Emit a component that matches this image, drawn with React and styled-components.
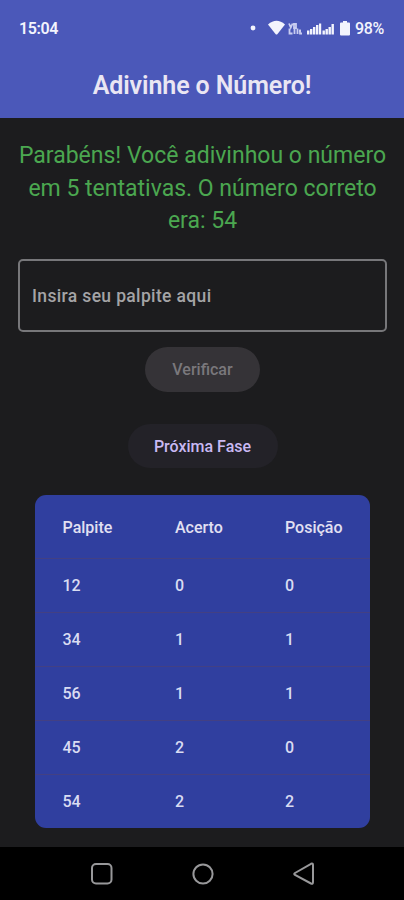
import React from 'react';
import styled, { createGlobalStyle } from 'styled-components';

const GlobalStyle = createGlobalStyle`
  * {
    box-sizing: border-box;
  }
  body {
    margin: 0;
    background-color: #1c1c1e;
    font-family: Roboto, sans-serif;
  }
`;

const Screen = styled.div`
  display: flex;
  flex-direction: column;
  width: 404px;
  height: 900px;
  overflow: hidden;
  background-color: #1c1c1e;
`;

const Header = styled.header`
  height: 118px;
  flex-shrink: 0;
  background-color: #4b58b9;
`;

const StatusBar = styled.div`
  display: flex;
  align-items: center;
  justify-content: space-between;
  height: 56px;
  padding: 0 20px 0 19px;
  color: #f3f4fd;
  font-size: 16px;
  font-weight: 600;
`;

const Clock = styled.span`
  letter-spacing: -0.4px;
`;

const StatusIcons = styled.div`
  display: flex;
  align-items: center;
`;

const Battery = styled.span`
  margin-left: 4px;
  font-weight: 500;
  letter-spacing: -0.3px;
`;

const Title = styled.h1`
  margin: 0;
  padding-top: 15px;
  line-height: 30px;
  color: #eae6f3;
  font-size: 25px;
  font-weight: 600;
  letter-spacing: -0.1px;
  text-align: center;
`;

const Content = styled.main`
  display: flex;
  flex: 1;
  flex-direction: column;
  align-items: center;
  padding: 22px 17px 0 18px;
`;

const Message = styled.p`
  width: 369px;
  margin: 0;
  color: #4ba750;
  font-size: 23px;
  line-height: 32.6px;
  text-align: center;
`;

const GuessField = styled.div`
  display: flex;
  align-items: center;
  width: 100%;
  height: 73px;
  margin-top: 21px;
  padding: 2px 0 0 12px;
  border: 2px solid #77777a;
  border-radius: 5px;
  color: #a4a4a6;
  font-size: 17.5px;
  font-weight: 500;
  letter-spacing: 0.35px;
`;

const Button = styled.button`
  width: ${(props) => props.$width}px;
  height: ${(props) => props.$height}px;
  margin-top: ${(props) => props.$top}px;
  padding: 1px 0 0;
  border: 0;
  border-radius: 23px;
  background-color: ${(props) => props.$background};
  color: ${(props) => props.$color};
  font-family: inherit;
  font-size: 16px;
  font-weight: 500;
`;

const Table = styled.div`
  width: 335px;
  margin-top: 27px;
  border-radius: 11px;
  background-color: #303f9f;
  color: #d9dcf2;
  font-size: 16px;
  font-weight: 500;
`;

const Row = styled.div`
  display: grid;
  grid-template-columns: 112.5px 110px 1fr;
  align-items: center;
  height: 54px;
  padding: 1px 0 0 27.5px;
  border-top: 1px solid #434083;
`;

const HeadRow = styled(Row)`
  height: 63px;
  padding-top: 2px;
  border-top: 0;
  color: #e2e0f2;
`;

const NavBar = styled.nav`
  display: flex;
  align-items: center;
  justify-content: center;
  gap: 77px;
  height: 53px;
  flex-shrink: 0;
  padding-left: 1px;
  background-color: #000;
`;

const guesses = [
  ['12', '0', '0'],
  ['34', '1', '1'],
  ['56', '1', '1'],
  ['45', '2', '0'],
  ['54', '2', '2'],
];

function SignalIcons() {
  return (
    <svg width="101" height="20" viewBox="0 -0.5 101 20" fill="#f3f4fd">
      <circle cx="3" cy="9.5" r="2.4" />
      <path d="M18 6 Q26.5 -1.5 35 6 L27.5 15.5 Q26.5 16.5 25.5 15.5 Z" />
      <g fill="none" stroke="#c9cdf1" strokeWidth="1.8">
        <path d="M39 5 l1.8 4 l1.8 -4 M44 5.500 h2 v4 h-2 z M39.5 10 v5 h3 M44.5 10 v5.500 M47.500 10 v5.500 M50 11 v4 h2 M49 12.5 h2" />
      </g>
      <path d="M57 12h2.4v4h-2.4zM60 10.5h2.4v5.5h-2.4zM63 8.5h2.4v7.5h-2.4zM66 6.5h2.4v9.5h-2.4zM69 5h2.2v11h-2.2z" />
      <path d="M72.5 12h2.4v4h-2.4zM75.5 10.5h2.4v5.5h-2.4zM78.5 8.5h2.4v7.5h-2.4zM81.5 5.5h2.4v10.5h-2.4z" />
      <path d="M93 2.5h4v1.5h2q1 0 1 1v11q0 1 -1 1h-8q-1 0 -1 -1V5q0 -1 1 -1h2z" />
    </svg>
  );
}

function App() {
  return (
    <>
      <GlobalStyle />
      <Screen>
        <Header>
          <StatusBar>
            <Clock>15:04</Clock>
            <StatusIcons>
              <SignalIcons />
              <Battery>98%</Battery>
            </StatusIcons>
          </StatusBar>
          <Title>Adivinhe o Número!</Title>
        </Header>
        <Content>
          <Message>
            Parabéns! Você adivinhou o número em 5 tentativas. O número correto era: 54
          </Message>
          <GuessField>Insira seu palpite aqui</GuessField>
          <Button $width={115} $height={45} $top={15} $background="#353337" $color="#7a787c">
            Verificar
          </Button>
          <Button $width={150} $height={44} $top={32} $background="#232228" $color="#c9b9f3">
            Próxima Fase
          </Button>
          <Table>
            <HeadRow>
              <span>Palpite</span>
              <span>Acerto</span>
              <span>Posição</span>
            </HeadRow>
            {guesses.map(([guess, hits, position]) => (
              <Row key={guess}>
                <span>{guess}</span>
                <span>{hits}</span>
                <span>{position}</span>
              </Row>
            ))}
          </Table>
        </Content>
        <NavBar>
          <svg width="24" height="24" viewBox="0 0 24 24" fill="none" stroke="#98989a" strokeWidth="2">
            <rect x="2" y="2" width="19.5" height="19.5" rx="4" />
          </svg>
          <svg width="24" height="24" viewBox="0 0 24 24" fill="none" stroke="#98989a" strokeWidth="2">
            <circle cx="12" cy="12" r="9.6" />
          </svg>
          <svg width="24" height="24" viewBox="0 0 24 24" fill="none" stroke="#98989a" strokeWidth="2">
            <path d="M3 11 L19 1.8 Q21 1 21 3 V20 Q21 22.5 19 21.5 L3 13 Q1.5 12 3 11 Z" />
          </svg>
        </NavBar>
      </Screen>
    </>
  );
}

export default App;
